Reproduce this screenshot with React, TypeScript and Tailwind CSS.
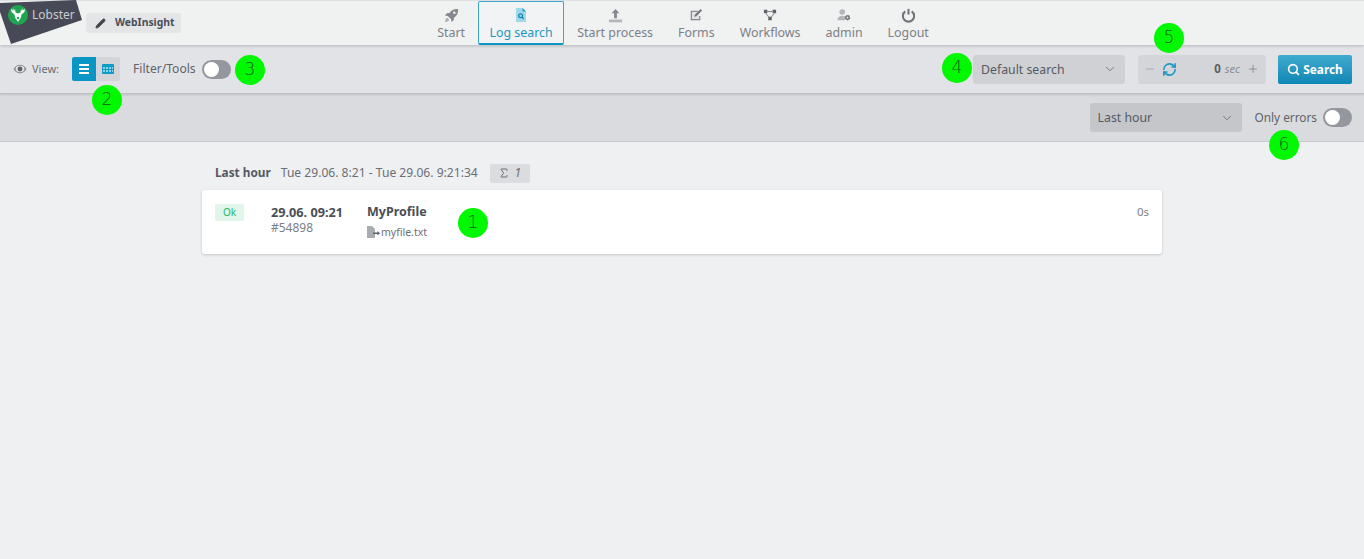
import React from 'react';
import { ChevronDown, Minus, Pencil, Plus, RefreshCw, Search, Sigma } from 'lucide-react';

const font = { fontFamily: '"Noto Sans", sans-serif' };

const RocketIcon = () => (
  <svg viewBox="0 0 16 16" className="w-[15px] h-[15px]" fill="#85888e">
    <path d="M15 1c-4-.4-7 1-9.2 4.2L3 5.6 1 8l3 .4L7.600 12l.4 3 2.400-2 .4-2.800C14 8 15.400 5 15 1z" />
    <circle cx="11" cy="5" r="1.300" fill="#f0f1f1" />
    <path d="M3.500 10.500C2 11 1.400 12.600 1.200 14.800c2.200-.2 3.800-.8 4.300-2.300z" fill="#a9acb1" />
  </svg>
);

const LogSearchIcon = () => (
  <svg viewBox="0 0 12 16" className="w-[12px] h-[16px]">
    <path d="M1 1h6.500L11 4.500V15H1z" fill="#9fd8ea" />
    <path d="M7.500 1L11 4.500H7.500z" fill="#1d9cc6" />
    <circle cx="5.600" cy="8.800" r="1.900" fill="none" stroke="#0f86b0" strokeWidth="1.200" />
    <path d="M7 10.200l1.700 1.700" stroke="#0f86b0" strokeWidth="1.300" />
  </svg>
);

const UploadIcon = () => (
  <svg viewBox="0 0 16 16" className="w-[15px] h-[15px]" fill="#85888e">
    <path d="M8 1L3.800 5.500h2.700V11h3V5.500h2.700z" />
    <rect x="1" y="12.300" width="14" height="3" fill="#b4b6ba" />
  </svg>
);

const FormsIcon = () => (
  <svg viewBox="0 0 16 16" className="w-[14px] h-[14px]">
    <path d="M2 3h8v1.500H3.500v8h8V9H13v5H2z" fill="#85888e" />
    <rect x="3.500" y="4.500" width="8" height="8" fill="#e3e4e6" />
    <path d="M13.300 1.200l1.600 1.600L8.300 9.400l-2.300.700.700-2.300z" fill="#6f7379" />
  </svg>
);

const WorkflowIcon = () => (
  <svg viewBox="0 0 16 16" className="w-[14px] h-[14px]" fill="#5f6369">
    <rect x="1" y="2" width="4" height="4" />
    <rect x="11" y="2" width="4" height="4" />
    <rect x="6" y="10" width="4" height="4" />
    <path d="M5 3.500h6v1H5zM3.500 6l4 4.500-.8.700-4-4.500zM12.500 6l-4 4.500.8.700 4-4.500z" fill="#85888e" />
  </svg>
);

const AdminIcon = () => (
  <svg viewBox="0 0 16 16" className="w-[14px] h-[14px]">
    <circle cx="6" cy="4.500" r="3.200" fill="#b4b6ba" />
    <path d="M0.500 14c0-3.500 2.300-5.200 5.500-5.200 1.200 0 2.200.2 3 .7V14z" fill="#b4b6ba" />
    <circle cx="12" cy="11" r="2.300" fill="none" stroke="#5f6369" strokeWidth="1.600" strokeDasharray="1.600 .5" />
    <circle cx="12" cy="11" r="1.500" fill="none" stroke="#5f6369" strokeWidth="1" />
  </svg>
);

const LogoutIcon = () => (
  <svg viewBox="0 0 16 16" className="w-[15px] h-[15px]" fill="none" stroke="#707479" strokeWidth="2.200">
    <path d="M4.600 3.600a6 6 0 1 0 6.800 0" />
    <path d="M8 1v6" />
  </svg>
);

const EyeIcon = () => (
  <svg viewBox="0 0 16 16" className="w-[14px] h-[14px]">
    <path d="M.5 8C2.500 4.600 5 3 8 3s5.500 1.600 7.500 5c-2 3.400-4.500 5-7.500 5S2.500 11.400.5 8z" fill="#8c9096" />
    <ellipse cx="8" cy="8" rx="5" ry="3.600" fill="#e2e3e6" />
    <circle cx="8" cy="8" r="2.800" fill="#5f636a" />
  </svg>
);

const GridIcon = () => (
  <svg viewBox="0 0 12 10" className="w-[12px] h-[10px]" fill="#0f9ac8">
    <rect x="0" y="0" width="12" height="10" rx="1" />
    <path d="M1 3h2v2H1zM4 3h2v2H4zM7 3h2v2H7zM10 3h1v2h-1zM1 6h2v2H1zM4 6h2v2H4zM7 6h2v2H7zM10 6h1v2h-1z" fill="#8ed0e6" />
  </svg>
);

const FileOutIcon = () => (
  <svg viewBox="0 0 13 12" className="w-[13px] h-[12px]">
    <path d="M0 0h5l3 3v9H0z" fill="#a9acb1" />
    <path d="M6 6.500h4.500V5L13 7.200l-2.500 2.200V8H6z" fill="#5f636a" />
  </svg>
);

const LogoMark = () => (
  <svg viewBox="0 0 20 20" className="w-[20px] h-[20px] shrink-0">
    <circle cx="10" cy="10" r="10" fill="#1fa54f" />
    <path d="M10 17l-3-4.500-.5-3L3.500 7 3 3.500l1.600 2L5 3l1 3 1-2 .5 3.500 2.500 1 2.500-1L13 4l1 2 1-3 .4 2.500 1.600-2L16.500 7l-3 2.500-.5 3z" fill="#fff" />
    <circle cx="10" cy="13" r="1.200" fill="#1fa54f" />
  </svg>
);

const navItems = [
  { label: 'Start', icon: <RocketIcon /> },
  { label: 'Log search', icon: <LogSearchIcon />, active: true },
  { label: 'Start process', icon: <UploadIcon /> },
  { label: 'Forms', icon: <FormsIcon /> },
  { label: 'Workflows', icon: <WorkflowIcon /> },
  { label: 'admin', icon: <AdminIcon /> },
  { label: 'Logout', icon: <LogoutIcon /> },
];

const Marker = ({ n, className }: { n: number; className: string }) => (
  <div className={`absolute w-[30px] h-[30px] rounded-full bg-[#00f800] flex items-center justify-center text-[17px] text-[#0b5c0b] ${className}`} style={{ fontFamily: '"DejaVu Sans", sans-serif', fontWeight: 200 }}>
    {n}
  </div>
);

const Toggle = () => (
  <div className="w-[29px] h-[19px] rounded-full bg-[#94989e] p-[2px] flex items-center">
    <div className="w-[15px] h-[15px] rounded-full bg-white" />
  </div>
);

const Dropdown = ({ label, className, textClass }: { label: string; className: string; textClass: string }) => (
  <div className={`h-[29px] rounded-[3px] flex items-center justify-between pl-2 pr-2 text-[12.3px] text-[#555a62] ${className}`}>
    <span className={textClass}>{label}</span>
    <ChevronDown className="w-[14px] h-[14px] text-[#6b7076]" strokeWidth={1.5} />
  </div>
);

export default function App() {
  return (
    <div className="relative w-[1364px] h-[559px] overflow-hidden bg-[#eff0f2] flex flex-col" style={font}>
      {/* top nav */}
      <header className="relative h-[45px] bg-[#f0f1f1] border-t border-[#dfe0e3] grid grid-cols-[1fr_auto_1fr] shadow-[0_1px_3px_rgba(0,0,0,0.2)] z-20">
        <div className="flex items-start">
          <div className="w-[86px]" />
          <div className="mt-[12px] h-[20px] pl-[9px] pr-[6px] bg-[#e4e5e7] rounded-[3px] flex items-center gap-[9px] text-[10.4px] font-bold text-[#4a4f57]">
            <Pencil className="w-[11px] h-[11px]" fill="#3f434a" />
            WebInsight
          </div>
        </div>
        <nav className="ml-[2px] flex items-stretch h-[44px] gap-[1px]">
          {navItems.map((item) => (
            <div
              key={item.label}
              className={`flex flex-col items-center justify-start text-[12.4px] leading-[17px] ${item.active ? 'px-[10.5px] pt-[4px] text-[#1d96bf] border border-[#3ea6c9] border-b-[2px] border-b-[#0f97c3] rounded-[2px] bg-[#f1f3f4]' : 'px-[12px] pt-[5px] text-[#7c8087]'}`}
            >
              <span className="h-[18px] flex items-center">{item.icon}</span>
              {item.label}
            </div>
          ))}
        </nav>
        <div />
      </header>

      {/* filter bar */}
      <div className="relative h-[49px] bg-[#e2e3e6] border-b border-[#bfc1c5] shadow-[0_1px_2px_rgba(0,0,0,0.12)] flex items-center justify-between pl-[13px] pr-[12px] z-10">
        <div className="flex items-center">
          <EyeIcon />
          <span className="ml-[5px] text-[11px] text-[#6a6e75]">View:</span>
          <div className="ml-[13px] flex h-[24px] rounded-[2px] overflow-hidden">
            <div className="w-[24px] bg-[#0a96c4] flex flex-col items-center justify-center gap-[2px]">
              <div className="w-[10px] h-[2px] bg-white" />
              <div className="w-[10px] h-[2px] bg-white" />
              <div className="w-[10px] h-[2px] bg-white" />
            </div>
            <div className="w-[24px] bg-[#d3d5d9] flex items-center justify-center">
              <GridIcon />
            </div>
          </div>
          <span className="ml-[13px] mt-[1px] text-[12.1px] text-[#5f636a]">Filter/Tools</span>
          <div className="ml-[6px]"><Toggle /></div>
        </div>
        <div className="flex items-center">
          <Dropdown label="Default search" className="w-[152px] bg-[#cfd1d5]" textClass="mt-[2px]" />
          <div className="ml-[13px] w-[128px] h-[29px] rounded-[3px] bg-[#d3d5d8] flex items-center pl-[6px] pr-[7px]">
            <Minus className="w-[12px] h-[12px] text-[#a8abb0]" />
            <RefreshCw className="ml-[6px] w-[15px] h-[15px] text-[#1d96c6]" strokeWidth={2.5} />
            <span className="ml-auto text-[11.5px] font-bold text-[#5a5e65]">0</span>
            <span className="ml-[4px] text-[11px] italic text-[#8c9096]">sec</span>
            <Plus className="ml-[7px] w-[12px] h-[12px] text-[#8c9096]" />
          </div>
          <div className="ml-[12px] w-[74px] h-[29px] rounded-[2px] bg-gradient-to-b from-[#3eaace] to-[#0a87b5] flex items-center justify-center gap-[3px] text-white text-[11.8px] font-bold">
            <Search className="w-[13px] h-[13px]" strokeWidth={3} />
            <span className="mt-[1px]">Search</span>
          </div>
        </div>
      </div>

      {/* time range bar */}
      <div className="h-[48px] bg-[#d9dbdf] border-b border-[#c8cacd] flex items-center justify-end pr-[12px]">
        <Dropdown label="Last hour" className="w-[152px] bg-[#c4c6ca]" textClass="mt-[1px]" />
        <span className="ml-[13px] text-[11.8px] text-[#5f636a]">Only errors</span>
        <div className="ml-[6px]"><Toggle /></div>
      </div>

      {/* results */}
      <main className="w-[960px] ml-[202px] pt-[21px]">
        <div className="flex items-center h-[20px] pl-[13px] text-[12.1px] text-[#6b6f76]">
          <span className="font-bold text-[11.8px] text-[#555a62]">Last hour</span>
          <span className="ml-[10px]">Tue 29.06. 8:21 - Tue 29.06. 9:21:34</span>
          <div className="ml-[12px] w-[40px] h-[19px] bg-[#dadce0] rounded-[2px] flex items-center justify-center gap-[4px] text-[#6b6f76]">
            <Sigma className="w-[12px] h-[12px]" strokeWidth={2} />
            <span className="italic text-[12px]">1</span>
          </div>
        </div>
        <div className="mt-[7px] h-[64px] bg-white rounded-[3px] shadow-[0_1px_3px_rgba(0,0,0,0.18)] flex items-start pl-[13px] pr-[13px] pt-[13px]">
          <div className="w-[29px] h-[17px] mt-[1px] bg-[#e1f5ea] rounded-[2px] flex items-center justify-center text-[10px] text-[#24b769]">Ok</div>
          <div className="ml-[27px] w-[96px]">
            <div className="text-[12.7px] leading-[18px] font-bold text-[#4a4e55]">29.06. 09:21</div>
            <div className="text-[12px] leading-[14px] text-[#7c8087]">#54898</div>
          </div>
          <div>
            <div className="text-[12.5px] leading-[18px] font-bold text-[#4a4e55]">MyProfile</div>
            <div className="mt-[2px] flex items-center gap-[1px] text-[10.5px] leading-[18px] text-[#6b6f76]">
              <FileOutIcon />
              myfile.txt
            </div>
          </div>
          <div className="ml-auto -mt-[1px] text-[11.5px] leading-[20px] text-[#7c8087]">0s</div>
        </div>
      </main>

      {/* logo overlay */}
      <div className="absolute left-0 top-0 w-[82px] h-[44px] bg-[#474a56] z-30 flex items-start pl-[8px] pt-[5px] gap-[4px] [clip-path:polygon(0_3px,76px_0,82px_20px,11px_44px,0_12px)]">
        <LogoMark />
        <span className="text-[12px] text-[#c9ccd0] leading-[20px]">Lobster</span>
      </div>

      <Marker n={1} className="left-[458px] top-[208px] z-30" />
      <Marker n={2} className="left-[92px] top-[85px] z-30" />
      <Marker n={3} className="left-[235px] top-[55px] z-30" />
      <Marker n={4} className="left-[942px] top-[53px] z-30" />
      <Marker n={5} className="left-[1154px] top-[23px] z-30" />
      <Marker n={6} className="left-[1269px] top-[130px] z-30" />
    </div>
  );
}
